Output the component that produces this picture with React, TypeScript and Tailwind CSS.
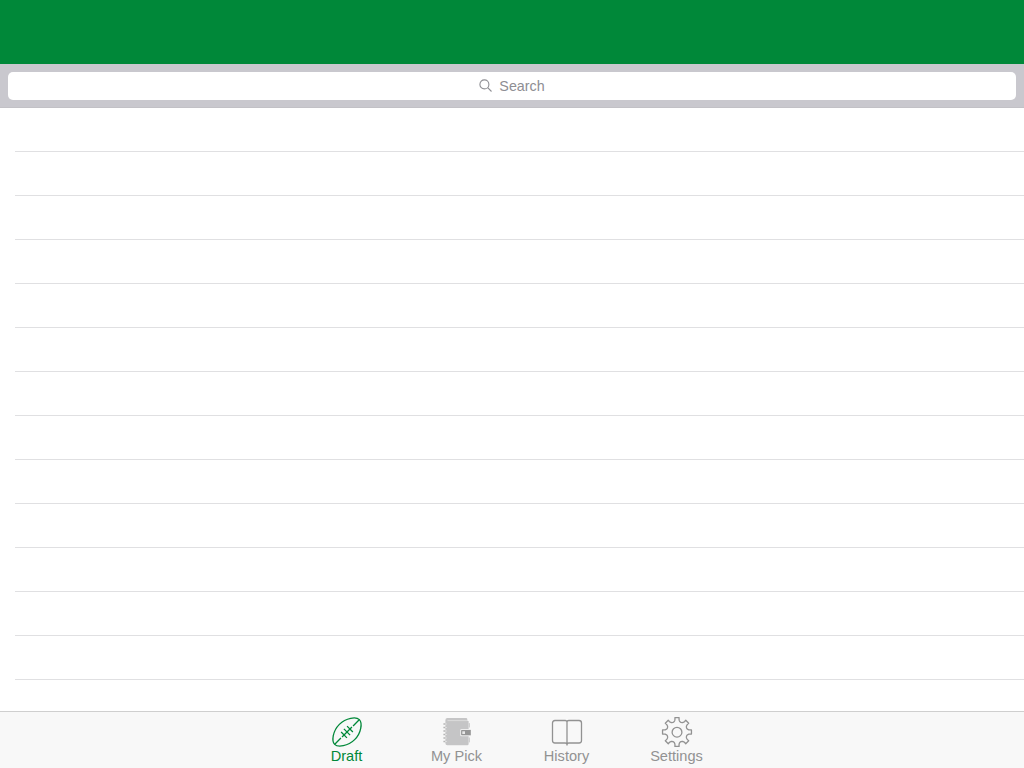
import type { ReactNode } from "react";

const TEETH = 8;

function gearPath(): string {
  const points: string[] = [];
  const profile: [number, number][] = [
    [-16, 10.7],
    [-13, 11.2],
    [-10.5, 12],
    [-9, 13],
    [-8.2, 14.6],
    [8.2, 14.6],
    [9, 13],
    [10.5, 12],
    [13, 11.2],
    [16, 10.7],
    [22.5, 10.4],
  ];
  for (let i = 0; i < TEETH; i++) {
    for (const [offset, radius] of profile) {
      const angle = ((i * 45 + offset) * Math.PI) / 180;
      points.push(
        `${(16 + radius * Math.sin(angle)).toFixed(2)} ${(16 - radius * Math.cos(angle)).toFixed(2)}`
      );
    }
  }
  return `M${points.join("L")}Z`;
}

function FootballIcon() {
  return (
    <svg className="size-8" viewBox="0 0 32 32" fill="none" stroke="currentColor" strokeWidth="1.3">
      <g transform="rotate(-45 16 16)">
        <path d="M-1.5 16C-1.5 11.5 6.5 5.2 16 5.2C25.5 5.2 33.5 11.5 33.5 16C33.5 20.5 25.5 26.8 16 26.8C6.5 26.8 -1.5 20.5 -1.5 16Z" />
        <path d="M-1.3 16H7.4M9 16H23M24.6 16H33.3" />
        <path d="M11.8 11.9V20.1M16 11.6V20.4M20.2 11.9V20.1" />
      </g>
    </svg>
  );
}

function NotebookIcon() {
  return (
    <svg className="size-8" viewBox="0 0 32 32" fill="none">
      <path d="M4.4 4Q4.4 2 6.4 2H25Q26.3 2 26.3 3.3V5H27.6V28Q27.6 29.3 26.3 29.3H6.4Q4.4 29.3 4.4 27.3Z" fill="#c5c5c6" />
      <path d="M27.6 7H28.4Q29 7 29 7.8V11.5H27.6ZM27.6 21.5H29V25.7Q29 26.5 28.4 26.5H27.6Z" fill="#d0d0d0" />
      <path d="M6.5 4.6H26.3" stroke="#dedede" strokeWidth=".9" />
      <path d="M2.4 8H4.6M2.4 11.5H4.6M2.4 15H4.6M2.4 18.5H4.6M2.4 22H4.6M2.4 25.5H4.6" stroke="#b5b5b5" strokeWidth="1.3" />
      <path d="M4.4 8h1.2M4.4 11.5h1.2M4.4 15h1.2M4.4 18.5h1.2M4.4 22h1.2M4.4 25.5h1.2" stroke="#ececec" strokeWidth="1" />
      <path d="M20.5 13.1H30V20.2H20.5Q19.2 20.2 19.2 18.9V14.4Q19.2 13.1 20.5 13.1Z" fill="#eeeeee" />
      <path d="M20.8 14.1H29.8V19.2H20.8Q20.1 19.2 20.1 18.5V14.8Q20.1 14.1 20.8 14.1Z" fill="#969696" />
      <rect x="21.3" y="15.3" width="2.7" height="2.7" fill="#e8e8e8" />
    </svg>
  );
}

function BookIcon() {
  return (
    <svg className="size-8" viewBox="0 0 32 32" fill="none" stroke="currentColor" strokeWidth="1.3">
      <path d="M16 6Q16 4.5 14.2 4.5H4Q1.5 4.5 1.5 7V24.5Q1.5 27 4 27H14.2Q16 27 16 28.7Q16 27 17.8 27H28Q30.5 27 30.5 24.5V7Q30.5 4.5 28 4.5H17.8Q16 4.5 16 6V29.5" />
    </svg>
  );
}

function GearIcon() {
  return (
    <svg className="size-8" viewBox="0 0 32 32" fill="none" stroke="currentColor" strokeWidth="1.3" strokeLinejoin="round">
      <path d={gearPath()} />
      <circle cx="16" cy="16.2" r="4.9" />
    </svg>
  );
}

function Tab({ icon, label, active = false }: { icon: ReactNode; label: string; active?: boolean }) {
  return (
    <button
      className={`flex w-[110px] flex-col items-center pt-1 ${active ? "text-[#008839]" : "text-[#929292]"}`}
    >
      {icon}
      <span className="pr-px text-[14.6px] leading-4">{label}</span>
    </button>
  );
}

export default function App() {
  return (
    <div className="flex h-screen w-full flex-col overflow-hidden bg-white font-['Liberation_Sans',Arial,sans-serif]">
      <header className="h-16 shrink-0 bg-[#008839]" />
      <div className="h-11 shrink-0 border-b border-[#c2c1c6] bg-[#c9c8ce] px-2 pt-2">
        <div className="flex h-7 items-center justify-center gap-[7px] rounded-[5px] bg-white text-[#8e8e93]">
          <svg className="mb-px size-[13px]" viewBox="0 0 13 13" fill="none" stroke="currentColor" strokeWidth="1.1">
            <circle cx="5.4" cy="5.4" r="4.5" />
            <path d="M8.7 8.7L12.5 12.5" />
          </svg>
          <span className="text-[14.3px] leading-4">Search</span>
        </div>
      </div>
      <main className="min-h-0 flex-1 overflow-hidden pl-[15px]">
        {Array.from({ length: 13 }, (_, i) => (
          <div key={i} className="h-11 border-b border-[#e0e0e2]" />
        ))}
      </main>
      <nav className="flex h-[57px] shrink-0 justify-center border-t border-[#cfcfcf] bg-[#f8f8f8]">
        <Tab icon={<FootballIcon />} label="Draft" active />
        <Tab icon={<NotebookIcon />} label="My Pick" />
        <Tab icon={<BookIcon />} label="History" />
        <Tab icon={<GearIcon />} label="Settings" />
      </nav>
    </div>
  );
}
